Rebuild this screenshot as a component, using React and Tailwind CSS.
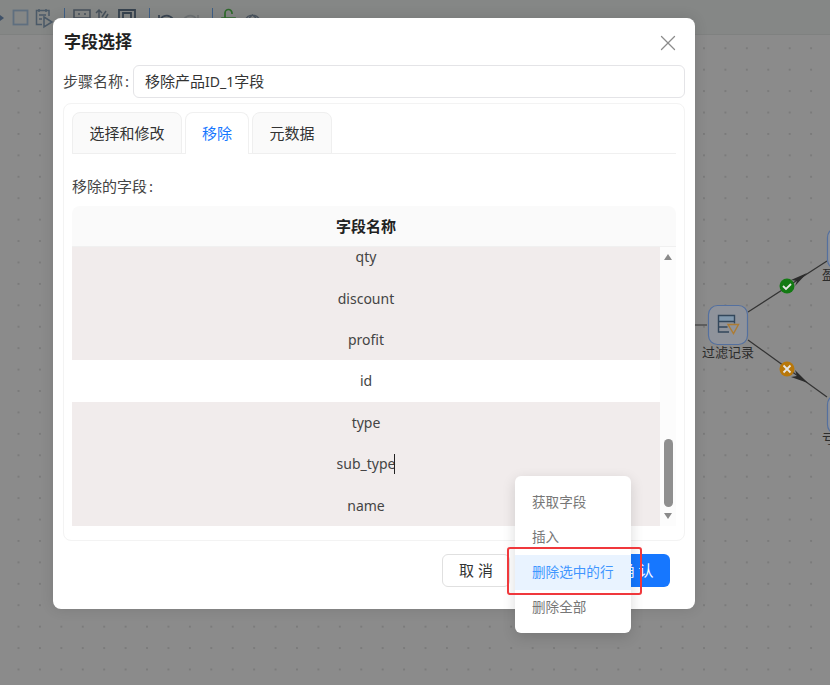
import { X } from 'lucide-react'

const FONT = "font-['Noto_Sans','Noto_Sans_CJK_SC',sans-serif]"

// Fields left in the remove list, already scrolled to the bottom
const FIELDS = [
  { name: 'qty', picked: true },
  { name: 'discount', picked: true },
  { name: 'profit', picked: true },
  { name: 'id', picked: false },
  { name: 'type', picked: true },
  { name: 'sub_type', picked: true, caret: true },
  { name: 'name', picked: true },
]

const MENU_ITEMS = ['获取字段', '插入', '删除选中的行', '删除全部']

function ToolbarIcons() {
  return (
    <svg width="280" height="34" viewBox="0 0 280 34" fill="none" className="block">
      <path d="M0 15l4 3-4 3z" fill="#3f5168" />
      <rect x="13.500" y="10.500" width="14" height="14" stroke="#5f6f7f" strokeWidth="1.8" />
      <path d="M49 16V10.500H36.500v14H42M39 9v3M46 9v3M39 15h7M39 19h3" stroke="#4b5a68" strokeWidth="1.5" />
      <path d="M44 17l8 5-8 5z" fill="#858786" stroke="#4b5a68" strokeWidth="1.5" />
      <path d="M64.500 8v12" stroke="#3f5f86" strokeWidth="1" />
      <path d="M74 10h16v8H74zM78 14h2M84 14h2" stroke="#47525c" strokeWidth="1.6" />
      <path d="M99 10v10M96 13l3-3 3 3M106 11l-4 6M108 14l-3 5" stroke="#47525c" strokeWidth="1.5" />
      <path d="M119 10h16v10h-16zM123 13h8v6h-8z" stroke="#36424e" strokeWidth="1.8" />
      <path d="M149.500 8v12" stroke="#3f5f86" strokeWidth="1" />
      <path d="M160 21c1-5 8-8 13-2M159 15v6h6" stroke="#3a4652" strokeWidth="1.800" />
      <path d="M197 21c-1-5-8-8-13-2M198 15v6h-6" stroke="#6e7274" strokeWidth="1.600" />
      <path d="M212.500 8v12" stroke="#3f5f86" strokeWidth="1" />
      <path d="M225 18v-5a3.500 3.500 0 0 1 7 0v1M222 18h13v4h-13z" stroke="#2f6b2c" strokeWidth="1.700" />
      <path d="M245 21a8 9 0 0 1 15 0M249 18l3.500-3 3.500 3" stroke="#4b5560" strokeWidth="1.400" />
    </svg>
  )
}

function CanvasDrawing() {
  return (
    <svg width="830" height="685" viewBox="0 0 830 685" fill="none" className="absolute left-0 top-0">
      <path d="M695 325h12" stroke="#444" strokeWidth="1.200" />
      <path d="M748 312L827 261M748 340L827 397" stroke="#333" strokeWidth="1.200" />
      <path d="M807 273L791 280L797 281L795 286z" fill="#2b2b2b" />
      <path d="M808 383L795 370L797 376L791 377z" fill="#2b2b2b" />
      <circle cx="787" cy="286" r="7.500" fill="#137a13" />
      <path d="M783 286l3 3 5-5" stroke="#e6e6e6" strokeWidth="1.800" />
      <circle cx="787" cy="369" r="7.500" fill="#b8770a" />
      <path d="M783.500 365.500l7 7M790.500 365.500l-7 7" stroke="#e6e6e6" strokeWidth="1.800" />
      <rect x="708.500" y="305.500" width="39" height="39" rx="9" fill="#8f939b" stroke="#54709f" strokeWidth="1.200" />
      <rect x="718.500" y="315.500" width="16" height="6" fill="#7f97ad" />
      <path d="M729 332h-10.500v-16.500h16v8M718.500 321.500h16M718.500 327h9" stroke="#33475c" strokeWidth="1.400" />
      <path d="M728 324.500h10.500l-5 9z" fill="#8f939b" stroke="#ad7c34" strokeWidth="1.400" />
      <rect x="827.500" y="229.500" width="12" height="38" rx="8" fill="#8f939b" stroke="#54709f" strokeWidth="1.200" />
      <rect x="827.500" y="396.500" width="12" height="36" rx="8" fill="#8f939b" stroke="#54709f" strokeWidth="1.200" />
    </svg>
  )
}

function App() {
  return (
    <div className={`relative h-[685px] w-[830px] overflow-hidden bg-[#8b8b8b] bg-[radial-gradient(circle,#747474_0.6px,transparent_0.9px)] bg-[length:21.43px_21.43px] bg-[position:7.8px_-5.3px] ${FONT}`}>
      {/* Toolbar behind the dimmed backdrop */}
      <div className="h-[35px] border-b border-[#7f8180] bg-[#858786]">
        <ToolbarIcons />
      </div>

      <CanvasDrawing />
      <span className="absolute left-[702px] top-[343px] whitespace-nowrap text-[13px] leading-[18px] text-[#2c2c2c]">过滤记录</span>
      <span className="absolute left-[822px] top-[265px] w-[8px] overflow-hidden whitespace-nowrap text-[13px] leading-[18px] text-[#2c2c2c]">盈</span>
      <span className="absolute left-[822px] top-[429px] w-[8px] overflow-hidden whitespace-nowrap text-[13px] leading-[18px] text-[#2c2c2c]">亏</span>

      {/* Dialog */}
      <div className="absolute left-[53px] top-[18px] flex h-[591px] w-[642px] flex-col rounded-lg bg-white px-[10px] shadow-[0_0_14px_rgba(0,0,0,0.12)]">
        <div className="flex h-[47px] shrink-0 items-center justify-between pl-px">
          <h1 className="mt-px text-[17px] font-semibold leading-6 text-[#222]">字段选择</h1>
          <X size={26} strokeWidth={1.2} className="mt-[3px] mr-[4px] text-[#8c8c8c]" />
        </div>

        <div className="flex shrink-0 items-center gap-[4px]">
          <label className="w-[66px] whitespace-nowrap text-[15px] text-[#444]">步骤名称<span className="ml-[2px]">:</span></label>
          <div className="flex h-[33px] flex-1 items-center rounded-md border border-[#e4e4e7] pl-[11px] text-[15px] text-[#333]">
            移除产品<span className="text-[14px]">ID_1</span>字段
          </div>
        </div>

        <div className="mt-[5px] h-[438px] shrink-0 rounded-lg border border-[#f3f3f3] px-[8px]">
          {/* Tabs */}
          <div className="mt-[8px] flex h-[42px] gap-[3px] border-b border-[#f0f0f0]">
            <div className="flex h-[42px] w-[110px] items-center justify-center rounded-t-lg border border-[#efefef] bg-[#fafafa] text-[15px] text-[#333]">选择和修改</div>
            <div className="flex h-[42px] w-[64px] items-center justify-center rounded-t-lg border border-b-0 border-[#f0f0f0] bg-white text-[15px] text-[#1677ff]">移除</div>
            <div className="flex h-[42px] w-[80px] items-center justify-center rounded-t-lg border border-[#efefef] bg-[#fafafa] text-[15px] text-[#333]">元数据</div>
          </div>

          <p className="mt-[21px] text-[15px] leading-[22px] text-[#444]">移除的字段<span className="ml-[2px]">:</span></p>

          {/* Table */}
          <div className="mt-[9px] w-[604px]">
            <div className="flex h-[41px] items-center justify-center rounded-t-lg border-b border-[#f0f0f0] bg-[#fafafa] pr-[16px] text-[15px] font-semibold text-[#222]">
              字段名称
            </div>
            <div className="flex h-[279px]">
              <div className="h-full w-[588px] overflow-hidden">
                <div className="-mt-[11px]">
                  {FIELDS.map((field) => (
                    <div
                      key={field.name}
                      className={`flex h-[41.4px] items-center justify-center text-[14px] text-[#444] ${field.picked ? 'bg-[#f1ecec]' : 'bg-white'}`}
                    >
                      {field.name}
                      {field.caret && <span className="-ml-px h-[20px] w-px bg-[#222]" />}
                    </div>
                  ))}
                </div>
              </div>
              {/* Scrollbar */}
              <div className="flex h-full w-[16px] flex-col items-center bg-[#fcfcfc] pt-[7px]">
                <div className="h-0 w-0 border-x-[4.5px] border-b-[6px] border-x-transparent border-b-[#8a8a8a]" />
                <div className="mt-[179px] h-[68px] w-[9px] rounded-full bg-[#8f8f8f]" />
                <div className="mt-[6px] h-0 w-0 border-x-[4.5px] border-t-[6px] border-x-transparent border-t-[#8a8a8a]" />
              </div>
            </div>
          </div>
        </div>

        {/* Footer, the middle button sits fully under the menu */}
        <div className="mt-[13px] flex justify-end gap-[8px] pr-[15px]">
          <button className="h-[33px] w-[68px] rounded-md border border-[#e0e0e0] bg-white text-[15px] text-[#333]">取 消</button>
          <div className="h-[33px] w-[77px]" />
          <button className="h-[33px] w-[67px] rounded-md bg-[#1677ff] text-[15px] text-white">确 认</button>
        </div>
      </div>

      {/* Right click menu */}
      <div className="absolute left-[515px] top-[476px] w-[116px] rounded-md bg-white py-[8.5px] shadow-[0_4px_14px_rgba(0,0,0,0.14)]">
        {MENU_ITEMS.map((item) => (
          <div
            key={item}
            className={`flex h-[35px] items-center whitespace-nowrap pl-[17px] text-[13.6px] ${item === '删除选中的行' ? 'bg-[#e9f3ff] text-[#4096ff]' : 'text-[#777]'}`}
          >
            {item}
          </div>
        ))}
      </div>

      {/* Red annotation box */}
      <div className="absolute left-[507px] top-[547px] h-[48px] w-[135px] rounded-[3px] border-2 border-[#f0383c]" />
    </div>
  )
}

export default App
